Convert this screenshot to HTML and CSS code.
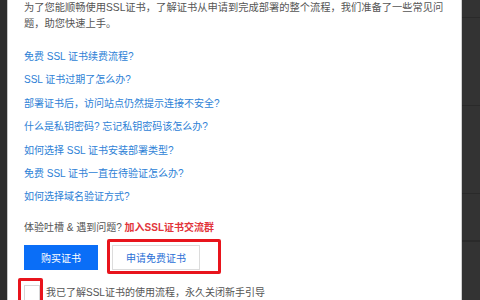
FILE: index.html
```html
<!DOCTYPE html>
<html lang="zh-CN">
<head>
    <meta charset="UTF-8">
    <meta name="viewport" content="width=device-width, initial-scale=1.0">
    <title>SSL证书新手引导</title>
    <link rel="stylesheet" href="styles.css">
</head>
<body>
    <div class="page">
        <div class="side-left"></div>

        <div class="dialog">
            <p class="intro">为了您能顺畅使用SSL证书，了解证书从申请到完成部署的整个流程，我们准备了一些常见问<br>题，助您快速上手。</p>

            <ul class="faq">
                <li><a href="#">免费 SSL 证书续费流程?</a></li>
                <li><a href="#">SSL 证书过期了怎么办?</a></li>
                <li><a href="#">部署证书后，访问站点仍然提示连接不安全?</a></li>
                <li><a href="#">什么是私钥密码? 忘记私钥密码该怎么办?</a></li>
                <li><a href="#">如何选择 SSL 证书安装部署类型?</a></li>
                <li><a href="#">免费 SSL 证书一直在待验证怎么办?</a></li>
                <li><a href="#">如何选择域名验证方式?</a></li>
            </ul>

            <p class="feedback">体验吐槽 &amp; 遇到问题? <a href="#" class="join">加入SSL证书交流群</a></p>

            <div class="actions">
                <button class="btn btn-primary">购买证书</button>
                <span class="marked">
                    <button class="btn btn-default">申请免费证书</button>
                    <span class="mark mark-apply"></span>
                </span>
            </div>

            <label class="guide">
                <span class="marked">
                    <span class="check"></span>
                    <span class="mark mark-check"></span>
                </span>
                <span class="guide-text">我已了解SSL证书的使用流程，永久关闭新手引导</span>
            </label>
        </div>

        <div class="side-right">
            <div class="tab tab-top"></div>
            <div class="tab" style="height:87px"></div>
            <div class="tab" style="height:87px"></div>
            <div class="tab" style="height:46px"></div>
            <div class="tab"></div>
        </div>
    </div>
</body>
</html>
```

FILE: styles.css
```css
html,body{
    margin:0;
    padding:0;
    height:100%;
    overflow:hidden;
}
body{
    background:#2e2e2e;
    font-family:"Liberation Sans", "Noto Sans CJK SC", sans-serif;
    font-size:10px;
}
.page{
    display:flex;
    height:300px;
}
.side-left{
    width:7px;
    background:#2c2c2c;
}
.dialog{
    flex:1;
    background:#fff;
    border-left:1px solid #c8c8c8;
    border-right:1px solid #d0d0d0;
    padding:0 17px 0 16px;
}
.intro{
    margin:0;
    font-size:10.25px;
    line-height:16px;
    color:#555;
}
.faq{
    list-style:none;
    margin:13px 0 0;
    padding:0;
}
.faq li{
    line-height:23.4px;
}
.faq a{
    color:#2e7fd6;
    text-decoration:none;
}
.feedback{
    margin:11px 0 0;
    line-height:16px;
    color:#555;
}
.join{
    color:#e2343a;
    font-weight:bold;
    text-decoration:none;
}
.actions{
    display:flex;
    gap:14px;
    margin-top:9px;
}
.btn{
    height:25px;
    padding:0;
    font-family:inherit;
    font-size:10px;
    border:1px solid transparent;
    border-radius:0;
}
.btn-primary{
    width:74px;
    background:#0a6ef7;
    color:#fff;
}
.btn-default{
    width:88px;
    background:#fff;
    border-color:#dcdcdc;
    color:#2b6fd6;
}
.marked{
    position:relative;
    display:flex;
}
.mark{
    position:absolute;
    border:3px solid #e8141c;
    border-radius:2px;
}
.mark-apply{
    left:-5px;
    top:-6px;
    width:108px;
    height:29px;
}
.guide{
    display:flex;
    align-items:center;
    gap:6px;
    margin-top:15px;
    line-height:16px;
    color:#555;
}
.check{
    width:14px;
    height:14px;
    border:1px solid #d6d6d6;
    background:#fff;
}
.mark-check{
    left:-6px;
    top:-7px;
    width:19px;
    height:24px;
}
.side-right{
    width:18px;
    background:#333;
    display:flex;
    flex-direction:column;
}
.tab{
    border-bottom:1px solid #2a2a2a;
}
.tab-top{
    height:17px;
}
```
